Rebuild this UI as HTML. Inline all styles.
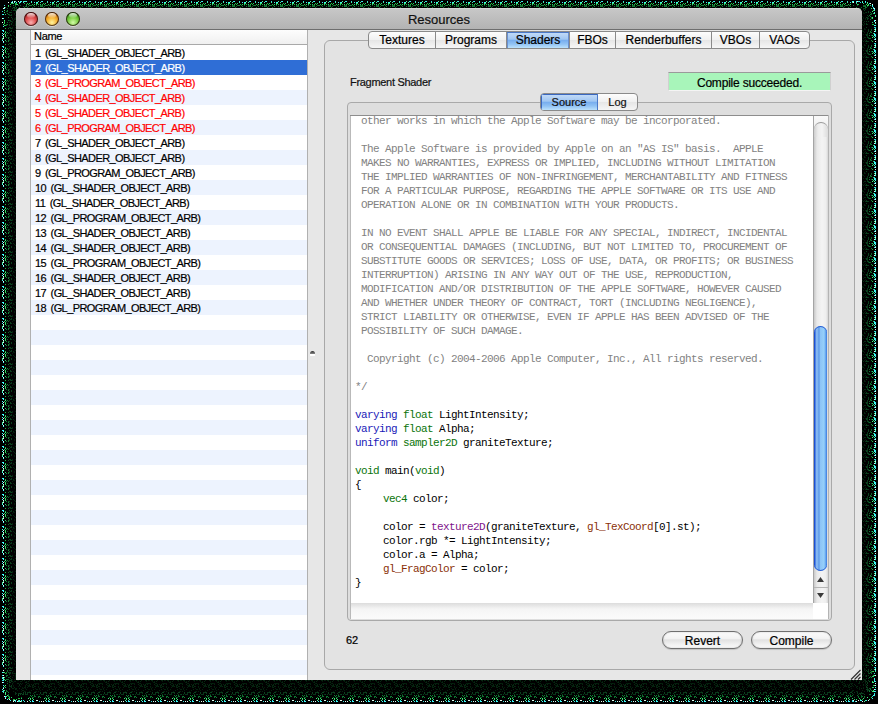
<!DOCTYPE html>
<html><head><meta charset="utf-8">
<style>
*{margin:0;padding:0;box-sizing:border-box}
html,body{width:878px;height:704px;overflow:hidden;background:#000}
body{position:relative;font-family:"Liberation Sans",sans-serif;-webkit-text-stroke:0.2px}
.a{position:absolute}
#win{left:16px;top:8px;width:846px;height:672px;background:#e7e7e7;border-radius:5px 5px 0 0}
#title{left:16px;top:8px;width:846px;height:21px;background:linear-gradient(#e2e2e2 0,#c7c7c7 1px,#b3b3b3 21px);border-radius:5px 5px 0 0}
#tline{left:16px;top:29px;width:846px;height:1px;background:#6e6e6e}
.tl{width:14px;height:14px;border-radius:50%;top:12px;box-shadow:inset 0 0 0 1px rgba(30,10,10,.75),0 1px 0 rgba(255,255,255,.5)}
.tl i{position:absolute;left:3px;top:1px;width:8px;height:5px;border-radius:50%;background:linear-gradient(rgba(255,255,255,.85),rgba(255,255,255,.1))}
#ttext{left:16px;width:846px;top:12px;text-align:center;font-size:13px;color:#111;line-height:15px}
#strip{left:16px;top:30px;width:14px;height:650px;background:#e8e8e8}
#vl1{left:30px;top:30px;width:1px;height:650px;background:#b0b0b0}
#table{left:31px;top:30px;width:276px;height:650px;background:#fff;overflow:hidden}
#vl2{left:307px;top:30px;width:1px;height:650px;background:#b0b0b0}
#hdr{left:0;top:0;width:276px;height:14px;background:linear-gradient(#fdfdfd,#f0f0f0)}
#hline{left:0;top:14px;width:276px;height:1px;background:#a9a9a9}
#hdr span{position:absolute;left:3px;top:-1px;font-size:11px;line-height:14px;color:#000;letter-spacing:-0.3px}
.row{position:absolute;left:0;width:276px;height:15px;font-size:11px;line-height:17px;padding-left:4px;letter-spacing:-0.58px;word-spacing:2px;white-space:nowrap;color:#000;-webkit-text-stroke:0.2px}
.row.b{background:#edf3fe}
.row.r{color:#f00}
.row.sel{background:#2f6ed6;color:#fff}
#tabbox{left:324px;top:40px;width:531px;height:630px;border:1px solid #a8a8a8;border-radius:6px;background:#e3e3e3}
#tabs{left:368px;top:31px;height:18px;display:flex;border:1px solid #8a8a8a;border-radius:4px;overflow:hidden;background:linear-gradient(#fdfdfd,#f0f0f0 50%,#e6e6e6 51%,#f6f6f6)}
.tab{height:16px;font-size:12px;line-height:16px;text-align:center;border-left:1px solid #8a8a8a;color:#000;letter-spacing:0px}
.tab:first-child{border-left:none}
.tab.on{background:linear-gradient(#c6ddf8,#a0c6f2 45%,#78aeee 52%,#90c2f4 75%,#bde2fc);color:#000;box-shadow:inset 0 1px 0 #4a78c8,inset 1px 0 0 #6a90d0,inset -1px 0 0 #6a90d0}
#flabel{left:350px;top:76px;font-size:11px;line-height:13px;color:#111;letter-spacing:-0.3px}
#green{left:668px;top:72px;width:163px;height:19px;background:#a8f5ba;border:1px solid #d0d0d0;border-top-color:#9a9a9a;border-bottom-color:#f4f4f4;font-size:12px;line-height:21px;text-align:center;color:#000;letter-spacing:-0.2px}
#grp{left:347px;top:102px;width:485px;height:519px;border:1px solid #a9a9a9;border-radius:4px;background:#dedede}
#seg{left:540px;top:93px;width:98px;height:18px;display:flex;border:1px solid #8a8a8a;border-radius:4px;overflow:hidden;background:linear-gradient(#fdfdfd,#f0f0f0 50%,#e6e6e6 51%,#f6f6f6)}
.sg{height:16px;font-size:11px;line-height:16px;text-align:center;color:#111}
.sg.on{background:linear-gradient(#c6ddf8,#a0c6f2 45%,#78aeee 52%,#90c2f4 75%,#bde2fc);border-right:1px solid #4a78c8;box-shadow:inset 1px 1px 0 #3a68c0}
#tatop{left:350px;top:115px;width:479px;height:1px;background:#8d8d8d}
#taleft{left:350px;top:116px;width:1px;height:503px;background:#b9b9b9}
#ta{left:351px;top:116px;width:462px;height:487px;background:#fff;overflow:hidden}
#code{left:4px;top:-2px;width:460px;height:500px;font-family:"Liberation Mono",monospace;font-size:11px;letter-spacing:-0.6px;line-height:14px;white-space:pre;color:#000;-webkit-text-stroke:0}
.ln{position:absolute;left:0;height:14px}
.cm{color:#828282}
.kb{color:#1a1ab8}
.kg{color:#0a740a}
.kp{color:#80148c}
.kr{color:#8a3008}
#sb{left:813px;top:116px;width:15px;height:487px;background:linear-gradient(90deg,#c9c9c9,#e9e9e9 3px,#f4f4f4 8px,#eeeeee 12px,#d6d6d6);border-left:1px solid #a5a5a5}
#thumb{left:814px;top:326px;width:13px;height:245px;border-radius:6.5px;background:linear-gradient(90deg,#1c50d2 0,#1c50d2 1px,#86b8f2 2px,#80b4f0 4px,#4f8fe6 5px,#8ac2f6 6px,#96d0fa 10px,#5a9cec 12px,#3a74da 13px);box-shadow:inset 0 1px 0 #2a5ed4,inset 0 -1px 0 #2a5ed4}
#sbr{left:828px;top:115px;width:1px;height:504px;background:#b4b4b4}
#bstrip{left:351px;top:603px;width:462px;height:16px;background:linear-gradient(#dcdcdc,#f5f5f5 6px,#fbfbfb)}
#corner{left:813px;top:603px;width:15px;height:16px;background:#fff}
#num{left:346px;top:634px;font-size:11px;line-height:13px;color:#000}
.btn{height:18px;border:1px solid #6f6f6f;border-radius:9px;background:linear-gradient(#fbfbfb,#f3f3f3 40%,#e2e2e2 50%,#f0f0f0 75%,#fafafa);font-size:12px;line-height:18px;text-align:center;color:#000;box-shadow:0 1px 1px rgba(0,0,0,.15),inset 0 0 2px rgba(0,0,0,.2)}
#sbcap{left:814px;top:116px;width:14px;height:18px;background:linear-gradient(#fafafa,#e8e8e8);border-bottom:none}
#sbcap:after{content:"";position:absolute;left:0;top:6px;width:14px;height:14px;border-radius:7px 7px 0 0;background:linear-gradient(90deg,#cfcfcf,#ececec 4px,#f4f4f4 8px,#dcdcdc);border-top:1px solid #9a9a9a}
#sbsep{left:814px;top:587px;width:14px;height:1px;background:#b5b5b5}
#dimple{left:310px;top:351px;width:5px;height:5px;border-radius:3px 3px 1px 1px;background:linear-gradient(#2a2a2a,#8a8a8a 60%,#fff 61%)}
</style></head><body>
<svg class="a" style="left:0;top:0" width="878" height="704" shape-rendering="crispEdges">
<defs>
<pattern id="pt" x="0" y="0" width="16" height="8" patternUnits="userSpaceOnUse"><path fill="#50f0a0" d="M6 1h1v1h-1zM8 2h1v1h-1zM15 2h1v1h-1z"/><path fill="#30e0e0" d="M9 1h1v1h-1zM15 1h1v1h-1z"/><path fill="#3ff0f0" d="M10 1h1v1h-1zM2 2h1v1h-1zM4 2h1v1h-1z"/><path fill="#40ffff" d="M5 2h1v1h-1z"/><path fill="#40f080" d="M4 3h1v1h-1z"/><path fill="#30e060" d="M5 3h1v1h-1zM2 4h1v1h-1z"/><path fill="#20c040" d="M11 3h1v1h-1zM0 4h1v1h-1zM6 4h1v1h-1zM10 4h1v1h-1zM12 4h1v1h-1z"/><path fill="#28d070" d="M13 3h1v1h-1zM4 4h1v1h-1zM8 4h1v1h-1z"/><path fill="#128036" d="M1 5h1v1h-1zM10 5h1v1h-1zM14 5h1v1h-1zM15 5h1v1h-1zM2 6h1v1h-1zM8 6h1v1h-1zM10 6h1v1h-1z"/><path fill="#0c602a" d="M4 5h1v1h-1zM9 5h1v1h-1zM12 6h1v1h-1zM11 7h1v1h-1z"/><path fill="#0e7030" d="M8 5h1v1h-1zM13 5h1v1h-1zM6 6h1v1h-1zM9 6h1v1h-1zM0 7h1v1h-1z"/></pattern>
<pattern id="pb" x="0" y="680" width="16" height="24" patternUnits="userSpaceOnUse"><path fill="#05240f" d="M1 0h1v1h-1zM4 0h1v1h-1zM13 0h1v1h-1zM4 3h1v1h-1zM12 3h1v1h-1zM6 4h1v1h-1zM13 4h1v1h-1zM15 4h1v1h-1zM1 5h1v1h-1zM0 6h1v1h-1zM3 6h1v1h-1zM6 6h1v1h-1zM0 7h1v1h-1zM11 7h1v1h-1zM7 8h1v1h-1zM4 9h1v1h-1zM5 9h1v1h-1zM10 9h1v1h-1zM15 10h1v1h-1zM4 11h1v1h-1zM6 11h1v1h-1z"/><path fill="#062a12" d="M2 0h1v1h-1zM7 0h1v1h-1zM8 0h1v1h-1zM12 1h1v1h-1zM10 2h1v1h-1zM1 4h1v1h-1zM3 4h1v1h-1zM10 4h1v1h-1zM0 5h1v1h-1zM13 5h1v1h-1zM2 6h1v1h-1zM12 6h1v1h-1zM14 6h1v1h-1zM1 7h1v1h-1zM1 9h1v1h-1z"/><path fill="#041c0c" d="M5 0h1v1h-1zM2 1h1v1h-1zM8 1h1v1h-1zM10 1h1v1h-1zM9 2h1v1h-1zM2 3h1v1h-1zM3 3h1v1h-1zM5 3h1v1h-1zM6 3h1v1h-1zM11 3h1v1h-1zM11 5h1v1h-1zM12 5h1v1h-1zM13 6h1v1h-1zM6 7h1v1h-1zM8 7h1v1h-1zM3 8h1v1h-1zM7 9h1v1h-1zM8 10h1v1h-1zM3 11h1v1h-1zM13 11h1v1h-1z"/><path fill="#0a4420" d="M2 12h1v1h-1zM3 12h1v1h-1zM8 12h1v1h-1zM5 14h1v1h-1z"/><path fill="#08361a" d="M11 12h1v1h-1zM12 12h1v1h-1zM11 13h1v1h-1zM14 13h1v1h-1zM4 14h1v1h-1zM7 14h1v1h-1zM9 14h1v1h-1zM10 14h1v1h-1zM11 14h1v1h-1z"/><path fill="#0c3e1c" d="M13 12h1v1h-1zM14 12h1v1h-1zM1 13h1v1h-1zM8 13h1v1h-1zM2 14h1v1h-1z"/><path fill="#128036" d="M0 15h1v1h-1zM14 15h1v1h-1zM7 16h1v1h-1zM15 16h1v1h-1zM8 17h1v1h-1zM13 17h1v1h-1z"/><path fill="#0e7030" d="M2 15h1v1h-1zM2 16h1v1h-1zM3 16h1v1h-1zM6 16h1v1h-1zM0 17h1v1h-1zM6 17h1v1h-1z"/><path fill="#0c602a" d="M1 17h1v1h-1z"/><path fill="#30e060" d="M0 18h1v1h-1zM14 19h1v1h-1z"/><path fill="#40f080" d="M12 18h1v1h-1zM14 18h1v1h-1zM1 19h1v1h-1z"/><path fill="#30e0e0" d="M0 20h1v1h-1zM7 21h1v1h-1z"/><path fill="#e0fff4" d="M4 20h1v1h-1zM5 20h1v1h-1zM9 21h1v1h-1zM11 21h1v1h-1z"/><path fill="#50f0a0" d="M13 20h1v1h-1z"/><path fill="#40ffff" d="M0 21h1v1h-1zM1 21h1v1h-1zM14 21h1v1h-1z"/></pattern>
<pattern id="pl" x="0" y="0" width="16" height="16" patternUnits="userSpaceOnUse"><path fill="#40f080" d="M5 0h1v1h-1z"/><path fill="#128036" d="M7 0h1v1h-1zM6 5h1v1h-1zM8 6h1v1h-1zM8 8h1v1h-1zM6 9h1v1h-1zM8 9h1v1h-1z"/><path fill="#08361a" d="M9 0h1v1h-1zM11 3h1v1h-1zM9 5h1v1h-1zM9 8h1v1h-1zM10 12h1v1h-1zM9 14h1v1h-1zM11 14h1v1h-1zM10 15h1v1h-1zM11 15h1v1h-1z"/><path fill="#041c0c" d="M13 0h1v1h-1zM14 0h1v1h-1zM12 1h1v1h-1zM14 7h1v1h-1zM14 8h1v1h-1z"/><path fill="#40ffff" d="M2 1h1v1h-1zM2 3h1v1h-1zM2 8h1v1h-1zM3 10h1v1h-1zM2 14h1v1h-1zM3 14h1v1h-1zM3 15h1v1h-1z"/><path fill="#28d070" d="M4 1h1v1h-1zM5 8h1v1h-1z"/><path fill="#0e7030" d="M6 1h1v1h-1z"/><path fill="#0c602a" d="M8 1h1v1h-1zM7 3h1v1h-1zM8 5h1v1h-1zM8 12h1v1h-1z"/><path fill="#e0fff4" d="M3 2h1v1h-1zM3 4h1v1h-1zM3 6h1v1h-1zM3 9h1v1h-1z"/><path fill="#30e060" d="M5 2h1v1h-1zM5 3h1v1h-1zM5 4h1v1h-1z"/><path fill="#0c3e1c" d="M10 2h1v1h-1zM10 3h1v1h-1zM11 6h1v1h-1zM11 7h1v1h-1zM9 11h1v1h-1zM10 11h1v1h-1z"/><path fill="#05240f" d="M13 3h1v1h-1zM14 4h1v1h-1zM12 11h1v1h-1zM15 11h1v1h-1zM12 12h1v1h-1z"/><path fill="#50f0a0" d="M3 5h1v1h-1zM2 6h1v1h-1zM2 7h1v1h-1z"/><path fill="#062a12" d="M15 5h1v1h-1zM15 14h1v1h-1zM13 15h1v1h-1z"/><path fill="#0a4420" d="M9 7h1v1h-1zM11 12h1v1h-1z"/><path fill="#20c040" d="M5 12h1v1h-1zM5 15h1v1h-1z"/></pattern>
<pattern id="pr" x="862" y="0" width="16" height="16" patternUnits="userSpaceOnUse"><path fill="#041c0c" d="M2 0h1v1h-1zM3 2h1v1h-1zM1 6h1v1h-1zM3 7h1v1h-1zM0 8h1v1h-1zM2 8h1v1h-1zM3 13h1v1h-1zM0 15h1v1h-1z"/><path fill="#08361a" d="M5 0h1v1h-1zM5 1h1v1h-1zM5 3h1v1h-1zM5 4h1v1h-1zM4 8h1v1h-1zM6 9h1v1h-1z"/><path fill="#0c602a" d="M8 0h1v1h-1zM7 1h1v1h-1zM9 3h1v1h-1zM8 6h1v1h-1zM9 13h1v1h-1zM9 14h1v1h-1z"/><path fill="#128036" d="M9 0h1v1h-1zM7 3h1v1h-1zM9 8h1v1h-1zM8 15h1v1h-1z"/><path fill="#28d070" d="M11 1h1v1h-1zM10 3h1v1h-1zM11 4h1v1h-1z"/><path fill="#30e0e0" d="M12 1h1v1h-1zM13 6h1v1h-1zM12 11h1v1h-1zM13 11h1v1h-1zM13 12h1v1h-1z"/><path fill="#05240f" d="M1 2h1v1h-1zM2 12h1v1h-1zM2 13h1v1h-1zM1 15h1v1h-1z"/><path fill="#0c3e1c" d="M4 2h1v1h-1zM5 2h1v1h-1zM6 6h1v1h-1zM5 9h1v1h-1zM4 11h1v1h-1zM6 13h1v1h-1z"/><path fill="#40ffff" d="M12 2h1v1h-1zM12 3h1v1h-1zM13 4h1v1h-1zM13 15h1v1h-1z"/><path fill="#3ff0f0" d="M13 2h1v1h-1zM13 3h1v1h-1zM12 7h1v1h-1z"/><path fill="#0a4420" d="M4 3h1v1h-1zM5 5h1v1h-1zM6 5h1v1h-1zM4 9h1v1h-1zM6 14h1v1h-1zM6 15h1v1h-1z"/><path fill="#062a12" d="M2 5h1v1h-1zM3 5h1v1h-1zM1 9h1v1h-1zM3 9h1v1h-1zM0 14h1v1h-1z"/><path fill="#40f080" d="M10 5h1v1h-1z"/><path fill="#50f0a0" d="M12 5h1v1h-1zM12 13h1v1h-1zM13 14h1v1h-1z"/><path fill="#0e7030" d="M7 6h1v1h-1z"/><path fill="#e0fff4" d="M13 7h1v1h-1zM13 9h1v1h-1zM13 13h1v1h-1zM12 15h1v1h-1z"/><path fill="#20c040" d="M10 9h1v1h-1z"/></pattern>
</defs>
<rect x="26" y="0" width="826" height="8" fill="url(#pt)"/>
<rect x="26" y="680" width="826" height="24" fill="url(#pb)"/>
<rect x="0" y="26" width="16" height="644" fill="url(#pl)"/>
<rect x="862" y="26" width="16" height="644" fill="url(#pr)"/>
<path fill="#40ffff" d="M12 1h1v1h-1zM20 1h1v1h-1zM11 2h1v1h-1zM14 2h1v1h-1zM4 8h1v1h-1zM3 14h1v1h-1zM3 18h1v1h-1z"/><path fill="#e0fff4" d="M14 1h1v1h-1zM18 1h1v1h-1zM8 2h1v1h-1zM12 2h1v1h-1zM4 7h1v1h-1zM3 8h1v1h-1zM2 18h1v1h-1zM2 22h1v1h-1z"/><path fill="#50f0a0" d="M15 1h1v1h-1zM23 1h1v1h-1zM25 1h1v1h-1zM3 24h1v1h-1z"/><path fill="#3ff0f0" d="M21 1h1v1h-1zM24 1h1v1h-1zM20 2h1v1h-1z"/><path fill="#30e0e0" d="M16 2h1v1h-1zM19 2h1v1h-1zM23 2h1v1h-1zM4 5h1v1h-1zM2 11h1v1h-1zM2 14h1v1h-1z"/><path fill="#20c040" d="M11 3h1v1h-1zM15 3h1v1h-1zM16 3h1v1h-1zM19 3h1v1h-1zM24 3h1v1h-1zM15 4h1v1h-1zM8 6h1v1h-1zM5 7h1v1h-1zM4 21h1v1h-1zM4 23h1v1h-1zM5 25h1v1h-1z"/><path fill="#28d070" d="M12 3h1v1h-1zM13 3h1v1h-1zM16 4h1v1h-1zM8 5h1v1h-1zM5 14h1v1h-1z"/><path fill="#30e060" d="M10 4h1v1h-1zM4 10h1v1h-1zM4 12h1v1h-1zM4 22h1v1h-1zM4 25h1v1h-1z"/><path fill="#40f080" d="M17 4h1v1h-1zM4 20h1v1h-1z"/><path fill="#128036" d="M13 5h1v1h-1zM7 10h1v1h-1zM7 13h1v1h-1zM8 17h1v1h-1zM7 24h1v1h-1z"/><path fill="#0c602a" d="M15 5h1v1h-1zM18 5h1v1h-1zM20 5h1v1h-1zM15 6h1v1h-1zM23 6h1v1h-1zM25 6h1v1h-1zM13 7h1v1h-1zM14 7h1v1h-1zM16 7h1v1h-1zM7 8h1v1h-1zM6 11h1v1h-1zM6 24h1v1h-1zM6 25h1v1h-1z"/><path fill="#0e7030" d="M10 6h1v1h-1zM19 7h1v1h-1zM24 7h1v1h-1zM7 11h1v1h-1zM8 14h1v1h-1zM8 20h1v1h-1zM7 22h1v1h-1z"/><path fill="#0c3e1c" d="M12 8h1v1h-1zM14 8h1v1h-1zM16 8h1v1h-1zM14 9h1v1h-1zM11 10h1v1h-1zM14 10h1v1h-1zM9 12h1v1h-1zM10 15h1v1h-1zM9 20h1v1h-1zM11 21h1v1h-1zM9 24h1v1h-1zM11 24h1v1h-1z"/><path fill="#08361a" d="M15 8h1v1h-1zM11 12h1v1h-1zM11 14h1v1h-1zM9 15h1v1h-1zM10 21h1v1h-1zM9 22h1v1h-1zM11 23h1v1h-1z"/><path fill="#0a4420" d="M18 8h1v1h-1zM16 9h1v1h-1zM13 10h1v1h-1zM15 10h1v1h-1zM16 10h1v1h-1zM10 12h1v1h-1zM9 14h1v1h-1zM11 15h1v1h-1zM11 17h1v1h-1zM10 20h1v1h-1zM9 25h1v1h-1z"/><path fill="#041c0c" d="M15 11h1v1h-1zM15 12h1v1h-1zM14 14h1v1h-1zM15 15h1v1h-1zM15 17h1v1h-1zM14 18h1v1h-1zM13 20h1v1h-1zM12 21h1v1h-1zM15 22h1v1h-1zM13 25h1v1h-1z"/><path fill="#062a12" d="M14 13h1v1h-1zM12 18h1v1h-1zM15 19h1v1h-1zM12 22h1v1h-1zM15 24h1v1h-1zM15 25h1v1h-1z"/><path fill="#05240f" d="M15 18h1v1h-1zM12 19h1v1h-1zM14 19h1v1h-1zM15 21h1v1h-1zM15 23h1v1h-1z"/><path fill="#40ffff" d="M852 1h1v1h-1zM853 1h1v1h-1zM865 1h1v1h-1zM862 2h1v1h-1zM872 5h1v1h-1zM873 8h1v1h-1zM874 9h1v1h-1zM874 20h1v1h-1zM874 21h1v1h-1zM874 25h1v1h-1zM875 25h1v1h-1z"/><path fill="#3ff0f0" d="M856 1h1v1h-1zM872 6h1v1h-1zM874 12h1v1h-1z"/><path fill="#e0fff4" d="M857 1h1v1h-1zM853 2h1v1h-1zM870 3h1v1h-1zM872 4h1v1h-1zM874 8h1v1h-1zM875 20h1v1h-1zM875 22h1v1h-1z"/><path fill="#30e0e0" d="M858 1h1v1h-1zM859 1h1v1h-1zM856 2h1v1h-1zM860 2h1v1h-1zM865 2h1v1h-1zM869 3h1v1h-1zM873 7h1v1h-1z"/><path fill="#50f0a0" d="M862 1h1v1h-1zM852 2h1v1h-1zM867 2h1v1h-1zM874 10h1v1h-1zM874 13h1v1h-1zM875 15h1v1h-1zM875 16h1v1h-1zM875 23h1v1h-1z"/><path fill="#28d070" d="M856 3h1v1h-1zM857 4h1v1h-1zM870 5h1v1h-1zM873 13h1v1h-1zM872 22h1v1h-1z"/><path fill="#30e060" d="M863 3h1v1h-1zM867 3h1v1h-1zM866 4h1v1h-1zM871 8h1v1h-1zM873 10h1v1h-1zM872 18h1v1h-1z"/><path fill="#20c040" d="M858 4h1v1h-1zM868 5h1v1h-1zM872 24h1v1h-1zM873 24h1v1h-1z"/><path fill="#40f080" d="M868 4h1v1h-1zM867 5h1v1h-1zM872 11h1v1h-1zM872 17h1v1h-1z"/><path fill="#0e7030" d="M853 5h1v1h-1zM863 6h1v1h-1zM864 6h1v1h-1zM867 6h1v1h-1zM861 7h1v1h-1zM866 7h1v1h-1zM871 13h1v1h-1zM869 15h1v1h-1zM871 17h1v1h-1zM870 19h1v1h-1z"/><path fill="#0c602a" d="M857 5h1v1h-1zM863 5h1v1h-1zM864 5h1v1h-1zM865 5h1v1h-1zM870 12h1v1h-1zM871 14h1v1h-1zM871 18h1v1h-1z"/><path fill="#128036" d="M865 6h1v1h-1zM856 7h1v1h-1zM865 7h1v1h-1zM870 14h1v1h-1zM870 16h1v1h-1z"/><path fill="#0a4420" d="M859 8h1v1h-1zM865 8h1v1h-1zM864 10h1v1h-1zM868 11h1v1h-1zM868 12h1v1h-1zM868 16h1v1h-1zM867 18h1v1h-1zM866 21h1v1h-1zM866 24h1v1h-1z"/><path fill="#0c3e1c" d="M860 8h1v1h-1zM863 8h1v1h-1zM864 8h1v1h-1zM867 15h1v1h-1zM866 17h1v1h-1zM867 19h1v1h-1zM868 21h1v1h-1z"/><path fill="#08361a" d="M860 9h1v1h-1zM863 9h1v1h-1zM865 9h1v1h-1zM866 12h1v1h-1zM867 17h1v1h-1zM868 18h1v1h-1zM866 23h1v1h-1zM867 24h1v1h-1z"/><path fill="#041c0c" d="M863 12h1v1h-1zM863 13h1v1h-1zM864 13h1v1h-1zM862 16h1v1h-1zM863 17h1v1h-1zM863 18h1v1h-1zM862 19h1v1h-1zM865 19h1v1h-1zM864 24h1v1h-1z"/><path fill="#05240f" d="M865 12h1v1h-1zM865 18h1v1h-1zM863 22h1v1h-1zM864 23h1v1h-1zM863 25h1v1h-1z"/><path fill="#062a12" d="M862 20h1v1h-1zM864 21h1v1h-1zM862 24h1v1h-1z"/><path fill="#e0fff4" d="M3 670h1v1h-1zM3 675h1v1h-1zM3 677h1v1h-1zM2 682h1v1h-1zM3 688h1v1h-1zM4 696h1v1h-1zM5 698h1v1h-1zM9 699h1v1h-1zM14 700h1v1h-1zM13 701h1v1h-1zM17 701h1v1h-1zM20 701h1v1h-1z"/><path fill="#0e7030" d="M7 670h1v1h-1zM6 675h1v1h-1zM7 675h1v1h-1zM6 676h1v1h-1zM6 679h1v1h-1zM7 679h1v1h-1zM8 694h1v1h-1zM18 695h1v1h-1zM9 696h1v1h-1zM21 697h1v1h-1z"/><path fill="#0c3e1c" d="M9 670h1v1h-1zM11 670h1v1h-1zM10 672h1v1h-1zM9 673h1v1h-1zM10 676h1v1h-1zM10 678h1v1h-1zM11 680h1v1h-1zM9 681h1v1h-1zM10 682h1v1h-1zM9 685h1v1h-1zM11 685h1v1h-1zM9 686h1v1h-1zM20 693h1v1h-1zM23 693h1v1h-1zM25 694h1v1h-1z"/><path fill="#0a4420" d="M10 670h1v1h-1zM9 674h1v1h-1zM9 677h1v1h-1zM9 680h1v1h-1zM9 682h1v1h-1zM23 692h1v1h-1zM25 692h1v1h-1zM19 693h1v1h-1zM21 693h1v1h-1zM18 694h1v1h-1zM20 694h1v1h-1zM22 694h1v1h-1zM23 694h1v1h-1z"/><path fill="#0c602a" d="M7 671h1v1h-1zM8 672h1v1h-1zM8 677h1v1h-1zM8 679h1v1h-1zM7 681h1v1h-1zM7 683h1v1h-1zM6 691h1v1h-1zM7 691h1v1h-1zM8 695h1v1h-1z"/><path fill="#041c0c" d="M13 671h1v1h-1zM13 673h1v1h-1zM15 674h1v1h-1zM15 677h1v1h-1zM15 678h1v1h-1zM12 679h1v1h-1zM15 679h1v1h-1zM13 682h1v1h-1zM22 683h1v1h-1zM12 684h1v1h-1zM13 685h1v1h-1zM13 686h1v1h-1zM18 686h1v1h-1zM22 687h1v1h-1zM22 688h1v1h-1zM23 688h1v1h-1zM25 688h1v1h-1zM16 689h1v1h-1zM17 690h1v1h-1zM21 691h1v1h-1zM25 691h1v1h-1z"/><path fill="#40ffff" d="M2 672h1v1h-1zM2 678h1v1h-1zM3 682h1v1h-1zM7 699h1v1h-1zM15 700h1v1h-1zM19 700h1v1h-1zM21 700h1v1h-1z"/><path fill="#50f0a0" d="M3 672h1v1h-1zM3 678h1v1h-1zM3 690h1v1h-1zM3 692h1v1h-1zM13 700h1v1h-1zM18 700h1v1h-1zM19 701h1v1h-1zM21 701h1v1h-1z"/><path fill="#30e060" d="M4 672h1v1h-1zM4 679h1v1h-1zM5 680h1v1h-1zM4 686h1v1h-1zM5 687h1v1h-1zM8 698h1v1h-1zM16 699h1v1h-1z"/><path fill="#128036" d="M6 672h1v1h-1zM6 673h1v1h-1zM6 690h1v1h-1zM8 692h1v1h-1z"/><path fill="#08361a" d="M9 672h1v1h-1zM10 673h1v1h-1zM11 679h1v1h-1zM10 680h1v1h-1zM11 681h1v1h-1zM9 684h1v1h-1zM10 686h1v1h-1zM11 686h1v1h-1zM11 687h1v1h-1zM9 688h1v1h-1zM9 689h1v1h-1zM15 692h1v1h-1zM15 693h1v1h-1zM16 693h1v1h-1zM18 693h1v1h-1zM25 693h1v1h-1zM15 694h1v1h-1z"/><path fill="#062a12" d="M12 672h1v1h-1zM12 673h1v1h-1zM14 673h1v1h-1zM15 675h1v1h-1zM18 680h1v1h-1zM22 680h1v1h-1zM24 680h1v1h-1zM12 681h1v1h-1zM15 681h1v1h-1zM25 682h1v1h-1zM12 683h1v1h-1zM17 683h1v1h-1zM18 683h1v1h-1zM20 683h1v1h-1zM19 684h1v1h-1zM19 685h1v1h-1zM14 687h1v1h-1zM12 688h1v1h-1zM13 688h1v1h-1zM16 688h1v1h-1zM19 688h1v1h-1zM15 689h1v1h-1zM22 690h1v1h-1z"/><path fill="#20c040" d="M5 673h1v1h-1zM8 696h1v1h-1zM9 698h1v1h-1zM18 698h1v1h-1zM19 698h1v1h-1zM13 699h1v1h-1zM14 699h1v1h-1z"/><path fill="#05240f" d="M15 673h1v1h-1zM13 675h1v1h-1zM15 676h1v1h-1zM12 677h1v1h-1zM14 679h1v1h-1zM17 680h1v1h-1zM14 681h1v1h-1zM20 681h1v1h-1zM21 681h1v1h-1zM21 684h1v1h-1zM25 685h1v1h-1zM20 686h1v1h-1zM25 686h1v1h-1zM24 687h1v1h-1zM25 687h1v1h-1zM15 688h1v1h-1zM21 689h1v1h-1zM23 690h1v1h-1zM13 691h1v1h-1zM24 691h1v1h-1z"/><path fill="#3ff0f0" d="M2 675h1v1h-1zM3 679h1v1h-1zM3 680h1v1h-1zM3 685h1v1h-1zM2 689h1v1h-1zM5 696h1v1h-1zM5 697h1v1h-1zM10 700h1v1h-1zM23 700h1v1h-1zM18 701h1v1h-1zM24 701h1v1h-1z"/><path fill="#30e0e0" d="M2 677h1v1h-1zM2 680h1v1h-1zM3 687h1v1h-1zM2 691h1v1h-1zM3 691h1v1h-1zM15 701h1v1h-1z"/><path fill="#40f080" d="M4 677h1v1h-1zM5 685h1v1h-1zM4 690h1v1h-1zM5 692h1v1h-1zM5 693h1v1h-1zM5 694h1v1h-1zM7 695h1v1h-1zM6 696h1v1h-1z"/><path fill="#28d070" d="M9 697h1v1h-1zM11 697h1v1h-1zM21 698h1v1h-1z"/><path fill="#05240f" d="M864 670h1v1h-1zM862 671h1v1h-1zM862 672h1v1h-1zM863 679h1v1h-1zM861 680h1v1h-1zM856 681h1v1h-1zM863 681h1v1h-1zM865 681h1v1h-1zM852 683h1v1h-1zM858 683h1v1h-1zM859 683h1v1h-1zM852 685h1v1h-1zM863 685h1v1h-1zM856 687h1v1h-1zM863 688h1v1h-1zM859 689h1v1h-1zM852 690h1v1h-1zM862 690h1v1h-1zM857 691h1v1h-1z"/><path fill="#0c3e1c" d="M866 670h1v1h-1zM868 673h1v1h-1zM866 675h1v1h-1zM868 675h1v1h-1zM868 678h1v1h-1zM868 680h1v1h-1zM866 681h1v1h-1zM867 682h1v1h-1zM867 683h1v1h-1zM866 686h1v1h-1zM867 687h1v1h-1zM852 693h1v1h-1zM859 693h1v1h-1zM861 693h1v1h-1zM858 694h1v1h-1z"/><path fill="#08361a" d="M868 670h1v1h-1zM867 671h1v1h-1zM868 672h1v1h-1zM866 678h1v1h-1zM867 688h1v1h-1zM868 689h1v1h-1zM868 690h1v1h-1zM867 691h1v1h-1zM854 692h1v1h-1zM857 692h1v1h-1zM857 693h1v1h-1zM863 693h1v1h-1zM853 694h1v1h-1z"/><path fill="#0c602a" d="M870 670h1v1h-1zM871 672h1v1h-1zM869 673h1v1h-1zM870 676h1v1h-1zM869 681h1v1h-1zM869 688h1v1h-1zM870 688h1v1h-1zM869 690h1v1h-1zM861 695h1v1h-1zM861 696h1v1h-1zM854 697h1v1h-1zM858 697h1v1h-1zM861 697h1v1h-1z"/><path fill="#3ff0f0" d="M875 670h1v1h-1zM874 678h1v1h-1zM874 679h1v1h-1zM874 681h1v1h-1zM875 681h1v1h-1zM874 694h1v1h-1zM874 695h1v1h-1zM872 698h1v1h-1zM861 700h1v1h-1zM853 701h1v1h-1zM855 701h1v1h-1z"/><path fill="#041c0c" d="M865 671h1v1h-1zM863 674h1v1h-1zM865 675h1v1h-1zM862 676h1v1h-1zM865 676h1v1h-1zM863 678h1v1h-1zM862 679h1v1h-1zM865 679h1v1h-1zM864 680h1v1h-1zM862 682h1v1h-1zM865 683h1v1h-1zM860 685h1v1h-1zM865 685h1v1h-1zM853 686h1v1h-1zM856 686h1v1h-1zM859 687h1v1h-1zM863 687h1v1h-1zM857 688h1v1h-1zM859 688h1v1h-1z"/><path fill="#0a4420" d="M868 671h1v1h-1zM866 676h1v1h-1zM866 684h1v1h-1zM867 685h1v1h-1zM866 687h1v1h-1zM866 689h1v1h-1zM867 689h1v1h-1zM867 690h1v1h-1zM861 692h1v1h-1zM860 693h1v1h-1zM862 693h1v1h-1zM860 694h1v1h-1zM864 694h1v1h-1z"/><path fill="#0e7030" d="M871 671h1v1h-1zM871 673h1v1h-1zM869 694h1v1h-1zM852 695h1v1h-1zM857 695h1v1h-1zM864 697h1v1h-1z"/><path fill="#20c040" d="M872 671h1v1h-1zM873 675h1v1h-1zM873 685h1v1h-1zM859 698h1v1h-1zM862 699h1v1h-1z"/><path fill="#30e060" d="M873 671h1v1h-1zM872 681h1v1h-1zM873 687h1v1h-1zM872 691h1v1h-1zM871 697h1v1h-1zM856 699h1v1h-1z"/><path fill="#50f0a0" d="M875 671h1v1h-1zM874 675h1v1h-1zM874 685h1v1h-1zM869 699h1v1h-1zM865 700h1v1h-1zM864 701h1v1h-1z"/><path fill="#128036" d="M870 672h1v1h-1zM869 677h1v1h-1zM871 677h1v1h-1zM870 689h1v1h-1zM871 690h1v1h-1zM869 691h1v1h-1zM870 694h1v1h-1zM858 696h1v1h-1zM862 696h1v1h-1zM864 696h1v1h-1z"/><path fill="#062a12" d="M862 673h1v1h-1zM864 673h1v1h-1zM863 675h1v1h-1zM864 679h1v1h-1zM853 680h1v1h-1zM856 680h1v1h-1zM860 680h1v1h-1zM865 680h1v1h-1zM859 681h1v1h-1zM859 682h1v1h-1zM865 682h1v1h-1zM854 684h1v1h-1zM863 684h1v1h-1zM855 685h1v1h-1zM857 686h1v1h-1zM861 688h1v1h-1zM853 690h1v1h-1zM852 691h1v1h-1zM856 691h1v1h-1zM864 691h1v1h-1z"/><path fill="#30e0e0" d="M874 673h1v1h-1zM874 680h1v1h-1zM875 691h1v1h-1zM874 693h1v1h-1zM872 696h1v1h-1zM852 700h1v1h-1zM866 700h1v1h-1zM852 701h1v1h-1z"/><path fill="#e0fff4" d="M875 675h1v1h-1zM875 683h1v1h-1zM875 685h1v1h-1zM874 689h1v1h-1zM853 700h1v1h-1zM858 700h1v1h-1zM868 700h1v1h-1zM856 701h1v1h-1zM862 701h1v1h-1z"/><path fill="#28d070" d="M872 676h1v1h-1zM873 676h1v1h-1zM872 687h1v1h-1zM873 690h1v1h-1zM852 698h1v1h-1zM854 699h1v1h-1zM860 699h1v1h-1z"/><path fill="#40f080" d="M872 682h1v1h-1zM873 682h1v1h-1zM873 691h1v1h-1zM867 697h1v1h-1zM863 698h1v1h-1z"/><path fill="#40ffff" d="M875 687h1v1h-1zM875 689h1v1h-1zM874 691h1v1h-1zM873 695h1v1h-1zM860 700h1v1h-1z"/>
</svg>
<div id="win" class="a"></div>
<div id="title" class="a"></div>
<div id="tline" class="a"></div>
<div class="a tl" style="left:24px;background:radial-gradient(circle at 50% 75%,#f9b0b0 0,#e05050 40%,#b02828 70%,#701010 88%,#3a0808 100%)"><i></i></div>
<div class="a tl" style="left:45px;background:radial-gradient(circle at 50% 75%,#fff4a0 0,#f5b030 42%,#d07a10 70%,#8a4a06 88%,#3e2404 100%)"><i></i></div>
<div class="a tl" style="left:66px;background:radial-gradient(circle at 50% 75%,#d4fba8 0,#78cc40 42%,#3e9a1c 70%,#1f5a0c 88%,#0e2a06 100%)"><i></i></div>
<div id="ttext" class="a">Resources</div>
<div id="strip" class="a"></div>
<div id="vl1" class="a"></div>
<div id="table" class="a">
<div id="hdr" class="a"><span>Name</span></div>
<div id="hline" class="a"></div>
<div class="row" style="top:15px">1 (GL_SHADER_OBJECT_ARB)</div>
<div class="row b sel" style="top:30px">2 (GL_SHADER_OBJECT_ARB)</div>
<div class="row r" style="top:45px">3 (GL_PROGRAM_OBJECT_ARB)</div>
<div class="row b r" style="top:60px">4 (GL_SHADER_OBJECT_ARB)</div>
<div class="row r" style="top:75px">5 (GL_SHADER_OBJECT_ARB)</div>
<div class="row b r" style="top:90px">6 (GL_PROGRAM_OBJECT_ARB)</div>
<div class="row" style="top:105px">7 (GL_SHADER_OBJECT_ARB)</div>
<div class="row b" style="top:120px">8 (GL_SHADER_OBJECT_ARB)</div>
<div class="row" style="top:135px">9 (GL_PROGRAM_OBJECT_ARB)</div>
<div class="row b" style="top:150px">10 (GL_SHADER_OBJECT_ARB)</div>
<div class="row" style="top:165px">11 (GL_SHADER_OBJECT_ARB)</div>
<div class="row b" style="top:180px">12 (GL_PROGRAM_OBJECT_ARB)</div>
<div class="row" style="top:195px">13 (GL_SHADER_OBJECT_ARB)</div>
<div class="row b" style="top:210px">14 (GL_SHADER_OBJECT_ARB)</div>
<div class="row" style="top:225px">15 (GL_PROGRAM_OBJECT_ARB)</div>
<div class="row b" style="top:240px">16 (GL_SHADER_OBJECT_ARB)</div>
<div class="row" style="top:255px">17 (GL_SHADER_OBJECT_ARB)</div>
<div class="row b" style="top:270px">18 (GL_PROGRAM_OBJECT_ARB)</div>
<div class="row" style="top:285px"></div>
<div class="row b" style="top:300px"></div>
<div class="row" style="top:315px"></div>
<div class="row b" style="top:330px"></div>
<div class="row" style="top:345px"></div>
<div class="row b" style="top:360px"></div>
<div class="row" style="top:375px"></div>
<div class="row b" style="top:390px"></div>
<div class="row" style="top:405px"></div>
<div class="row b" style="top:420px"></div>
<div class="row" style="top:435px"></div>
<div class="row b" style="top:450px"></div>
<div class="row" style="top:465px"></div>
<div class="row b" style="top:480px"></div>
<div class="row" style="top:495px"></div>
<div class="row b" style="top:510px"></div>
<div class="row" style="top:525px"></div>
<div class="row b" style="top:540px"></div>
<div class="row" style="top:555px"></div>
<div class="row b" style="top:570px"></div>
<div class="row" style="top:585px"></div>
<div class="row b" style="top:600px"></div>
<div class="row" style="top:615px"></div>
<div class="row b" style="top:630px"></div>
<div class="row" style="top:645px"></div>
</div>
<div id="vl2" class="a"></div>
<div id="tabbox" class="a"></div>
<div id="tabs" class="a">
<div class="tab" style="width:66px">Textures</div>
<div class="tab" style="width:71px">Programs</div>
<div class="tab on" style="width:63px">Shaders</div>
<div class="tab" style="width:46px">FBOs</div>
<div class="tab" style="width:96px">Renderbuffers</div>
<div class="tab" style="width:48px">VBOs</div>
<div class="tab" style="width:50px">VAOs</div>
</div>
<div id="flabel" class="a">Fragment Shader</div>
<div id="green" class="a">Compile succeeded.</div>
<div id="grp" class="a"></div>
<div id="tatop" class="a"></div>
<div id="taleft" class="a"></div>
<div id="ta" class="a"><div id="code" class="a">
<div class="ln cm" style="top:0px"> other works in which the Apple Software may be incorporated.</div>
<div class="ln cm" style="top:28px"> The Apple Software is provided by Apple on an &quot;AS IS&quot; basis.  APPLE</div>
<div class="ln cm" style="top:42px"> MAKES NO WARRANTIES, EXPRESS OR IMPLIED, INCLUDING WITHOUT LIMITATION</div>
<div class="ln cm" style="top:56px"> THE IMPLIED WARRANTIES OF NON-INFRINGEMENT, MERCHANTABILITY AND FITNESS</div>
<div class="ln cm" style="top:70px"> FOR A PARTICULAR PURPOSE, REGARDING THE APPLE SOFTWARE OR ITS USE AND</div>
<div class="ln cm" style="top:84px"> OPERATION ALONE OR IN COMBINATION WITH YOUR PRODUCTS.</div>
<div class="ln cm" style="top:112px"> IN NO EVENT SHALL APPLE BE LIABLE FOR ANY SPECIAL, INDIRECT, INCIDENTAL</div>
<div class="ln cm" style="top:126px"> OR CONSEQUENTIAL DAMAGES (INCLUDING, BUT NOT LIMITED TO, PROCUREMENT OF</div>
<div class="ln cm" style="top:140px"> SUBSTITUTE GOODS OR SERVICES; LOSS OF USE, DATA, OR PROFITS; OR BUSINESS</div>
<div class="ln cm" style="top:154px"> INTERRUPTION) ARISING IN ANY WAY OUT OF THE USE, REPRODUCTION,</div>
<div class="ln cm" style="top:168px"> MODIFICATION AND/OR DISTRIBUTION OF THE APPLE SOFTWARE, HOWEVER CAUSED</div>
<div class="ln cm" style="top:182px"> AND WHETHER UNDER THEORY OF CONTRACT, TORT (INCLUDING NEGLIGENCE),</div>
<div class="ln cm" style="top:196px"> STRICT LIABILITY OR OTHERWISE, EVEN IF APPLE HAS BEEN ADVISED OF THE</div>
<div class="ln cm" style="top:210px"> POSSIBILITY OF SUCH DAMAGE.</div>
<div class="ln cm" style="top:238px">  Copyright (c) 2004-2006 Apple Computer, Inc., All rights reserved.</div>
<div class="ln cm" style="top:266px">*/</div>
<div class="ln" style="top:294px"><span class="kb">varying</span> <span class="kg">float</span> LightIntensity;</div>
<div class="ln" style="top:308px"><span class="kb">varying</span> <span class="kg">float</span> Alpha;</div>
<div class="ln" style="top:322px"><span class="kb">uniform</span> <span class="kg">sampler2D</span> graniteTexture;</div>
<div class="ln" style="top:350px"><span class="kg">void</span> main(<span class="kg">void</span>)</div>
<div class="ln" style="top:364px">{</div>
<div class="ln" style="top:378px;left:28px"><span class="kg">vec4</span> color;</div>
<div class="ln" style="top:406px;left:28px">color = <span class="kp">texture2D</span>(graniteTexture, <span class="kr">gl_TexCoord</span>[0].st);</div>
<div class="ln" style="top:420px;left:28px">color.rgb *= LightIntensity;</div>
<div class="ln" style="top:434px;left:28px">color.a = Alpha;</div>
<div class="ln" style="top:448px;left:28px"><span class="kr">gl_FragColor</span> = color;</div>
<div class="ln" style="top:462px">}</div>
</div></div>
<div id="sb" class="a"></div>
<div id="thumb" class="a"></div>
<div id="sbr" class="a"></div>
<div id="bstrip" class="a"></div>
<div id="corner" class="a"></div>
<div id="seg" class="a">
<div class="sg on" style="width:57px">Source</div>
<div class="sg" style="width:39px">Log</div>
</div>
<div id="sbcap" class="a"></div>
<div id="sbsep" class="a"></div>
<svg class="a" style="left:813px;top:572px" width="15" height="31">
<polygon points="4,10 11,10 7.5,5" fill="#3a3a3a"/>
<polygon points="4,21 11,21 7.5,26" fill="#3a3a3a"/>
</svg>
<svg class="a" style="left:848px;top:667px" width="14" height="13">
<path d="M3,12.5 L12.5,3 M6.5,12.5 L12.5,6.5 M10,12.5 L12.5,10" stroke="#333" stroke-width="1.2"/>
</svg>
<div id="dimple" class="a"></div>
<div id="num" class="a">62</div>
<div class="a btn" style="left:662px;top:631px;width:81px">Revert</div>
<div class="a btn" style="left:751px;top:631px;width:81px">Compile</div>
</body></html>
